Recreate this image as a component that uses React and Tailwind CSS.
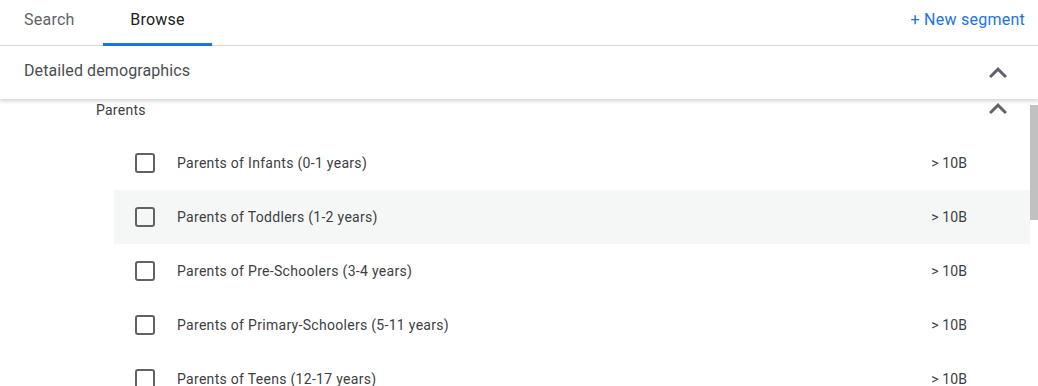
import { useState } from "react";

const rows = [
  { id: 1, label: "Parents of Infants (0-1 years)", size: "> 10B" },
  { id: 2, label: "Parents of Toddlers (1-2 years)", size: "> 10B" },
  { id: 3, label: "Parents of Pre-Schoolers (3-4 years)", size: "> 10B" },
  { id: 4, label: "Parents of Primary-Schoolers (5-11 years)", size: "> 10B" },
  { id: 5, label: "Parents of Teens (12-17 years)", size: "> 10B" },
];

function ExpandLess() {
  return (
    <svg width="36" height="36" viewBox="0 0 24 24" fill="#5f6368">
      <path d="M7.41 15.41L12 10.83l4.59 4.58L18 14l-6-6-6 6z" />
    </svg>
  );
}

export default function App() {
  const [hovered, setHovered] = useState(2);

  return (
    <div
      className="w-[1038px] h-[386px] bg-white overflow-hidden flex flex-col text-[#3c4043]"
      style={{ fontFamily: "Roboto, 'Liberation Sans', sans-serif" }}
    >
      {/* tabs */}
      <div className="h-[46px] shrink-0 flex items-stretch border-b border-[#dadce0]">
        <div className="w-[103px] flex items-center pl-[24px] pb-[6px] text-[16px] tracking-[0.25px] text-[#5f6368]">
          Search
        </div>
        <div className="w-[109px] flex items-center justify-center pb-[3px] text-[16px] tracking-[0.25px] text-[#202124] border-b-[3px] border-[#1a73e8] mb-[-1px]">
          Browse
        </div>
        <div className="flex-1" />
        <div className="flex items-center pr-[13px] pb-[6px] text-[16px] tracking-[0.25px] text-[#1a73e8]">
          + New segment
        </div>
      </div>

      {/* section header */}
      <div className="relative z-10 h-[53px] shrink-0 flex items-center justify-between pl-[24px] pr-[22px] bg-white shadow-[0_2px_4px_rgba(0,0,0,0.18)]">
        <span className="text-[16px] tracking-[0.1px] text-[#4a4d51] mb-[3px]">Detailed demographics</span>
        <ExpandLess />
      </div>

      {/* scroll area */}
      <div className="flex-1 flex min-h-0">
        <div className="flex-1 flex flex-col">
          <div className="h-[37px] shrink-0 flex items-start justify-between pl-[96px] pr-[14px]">
            <span className="text-[14px] tracking-[0.25px] mt-[1px]">Parents</span>
            <div className="mt-[-8px]">
              <ExpandLess />
            </div>
          </div>
          {rows.map((r) => (
            <div
              key={r.id}
              onMouseEnter={() => setHovered(r.id)}
              className={
                "h-[54px] shrink-0 ml-[114px] flex items-center pl-[21px] pr-[63px] " +
                (hovered === r.id ? "bg-[#f5f7f6]" : "bg-white")
              }
            >
              <div className="w-[20px] h-[20px] rounded-[3px] border-2 border-[#5f6368] shrink-0" />
              <span className="ml-[22px] text-[14px] tracking-[0.3px] text-[#3c4043] flex-1 mt-[1px]">{r.label}</span>
              <span className="text-[14px] tracking-[0.1px] text-[#3c4043] mt-[1px]">{r.size}</span>
            </div>
          ))}
        </div>
        <div className="w-[8px] shrink-0">
          <div className="mt-[6px] h-[115px] bg-[#c1c1c1]" />
        </div>
      </div>
    </div>
  );
}
